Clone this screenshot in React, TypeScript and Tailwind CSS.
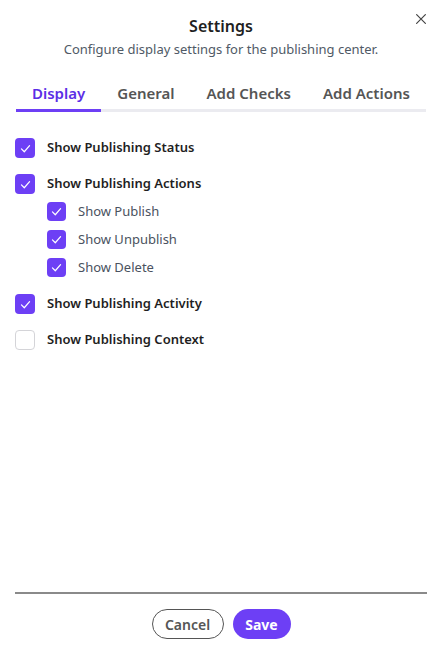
import React from 'react'

const font = { fontFamily: '"Noto Sans", "Open Sans", sans-serif' }

function Check({ checked, small }: { checked: boolean; small?: boolean }) {
    const size = small ? 'size-[19px]' : 'size-5'
    if (!checked) {
        return <span className={`${size} shrink-0 rounded-[4px] border border-[#d4d4d8] bg-white`} />
    }
    return (
        <span className={`${size} shrink-0 rounded-[4px] bg-[#6d3ff5] flex items-center justify-center`}>
            <svg viewBox="0 0 16 16" className="size-[13px]" fill="none" stroke="white" strokeWidth="1.5" strokeLinecap="round" strokeLinejoin="round">
                <path d="M3 8.5 6.5 12 13 4.5" />
            </svg>
        </span>
    )
}

const tabs = ['Display', 'General', 'Add Checks', 'Add Actions']

export default function App() {
    return (
        <div className="w-[442px] h-[645px] bg-white flex flex-col relative text-[#1f1f1f]" style={font}>
            <button className="absolute right-[10px] top-[8px] p-1 text-[#444]">
                <svg viewBox="0 0 16 16" className="size-[14px]" fill="none" stroke="currentColor" strokeWidth="1.4" strokeLinecap="round">
                    <path d="M3 3 13 13M13 3 3 13" />
                </svg>
            </button>
            <div className="pt-[14px] text-center">
                <h1 className="text-[16px] leading-6 font-semibold">Settings</h1>
                <p className="mt-[1px] text-[13px] leading-5 text-[#505a66]">Configure display settings for the publishing center.</p>
            </div>
            <div className="mx-4 mt-[23px] flex border-b-[3px] border-[#ebebf0]">
                {tabs.map((t, i) => (
                    <div key={t} className={`px-4 pb-[5px] -mb-[3px] text-[15px] leading-[22px] font-semibold ${i === 0 ? 'text-[#5b2ee6] border-b-[3px] border-[#6d3ff5]' : 'text-[#555] border-b-[3px] border-transparent'}`}>
                        {t}
                    </div>
                ))}
            </div>
            <div className="flex-1 pl-[15px] pt-[26px] flex flex-col">
                <label className="flex items-center gap-3 h-5 text-[13px] font-semibold">
                    <Check checked /> Show Publishing Status
                </label>
                <label className="flex items-center gap-3 h-5 mt-4 text-[13px] font-semibold">
                    <Check checked /> Show Publishing Actions
                </label>
                <div className="pl-8 flex flex-col gap-[9px] mt-[8px]">
                    {['Show Publish', 'Show Unpublish', 'Show Delete'].map(s => (
                        <label key={s} className="flex items-center gap-3 h-[19px] text-[13px] text-[#4a5260]">
                            <Check checked small /> {s}
                        </label>
                    ))}
                </div>
                <label className="flex items-center gap-3 h-5 mt-[17px] text-[13px] font-semibold">
                    <Check checked /> Show Publishing Activity
                </label>
                <label className="flex items-center gap-3 h-5 mt-4 text-[13px] font-semibold">
                    <Check checked={false} /> Show Publishing Context
                </label>
            </div>
            <div className="mx-[15px] border-t-2 border-[#8a8a8a]" />
            <div className="flex justify-center gap-[9px] pt-[15px] h-[51px]">
                <button className="w-[72px] h-[30px] rounded-full border border-[#555] text-[14px] font-semibold text-[#555]">Cancel</button>
                <button className="w-[58px] h-[30px] rounded-full bg-[#6d3ff5] text-[14px] font-bold text-white">Save</button>
            </div>
        </div>
    )
}
